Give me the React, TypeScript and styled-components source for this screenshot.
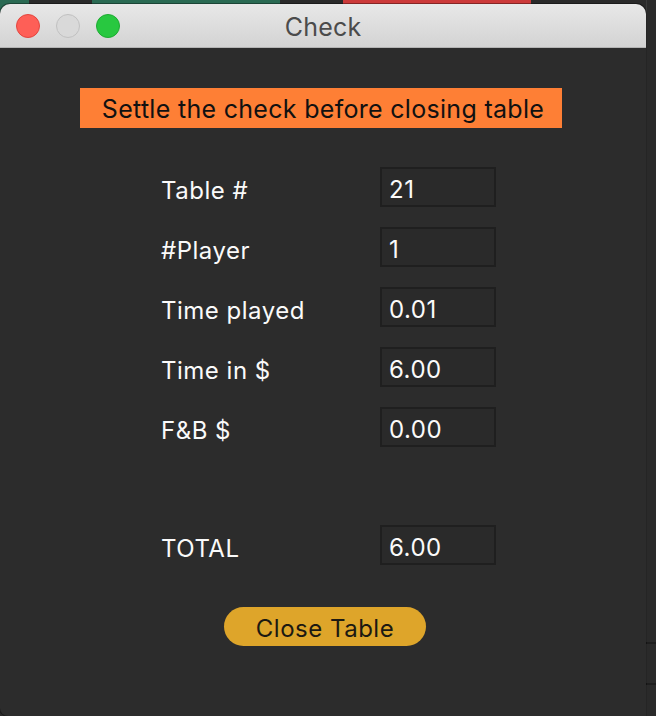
import React from "react";
import styled, { createGlobalStyle } from "styled-components";

const Global = createGlobalStyle`
  html, body { margin: 0; padding: 0; background: #2a2a2a; overflow: hidden; }
  * { box-sizing: border-box; }
`;

const Desktop = styled.div`
  position: relative;
  width: 656px;
  height: 716px;
  overflow: hidden;
  background: #2a2a2a;
  padding-top: 4px;
  font-family: Inter, "Noto Sans", "Liberation Sans", sans-serif;
`;

const BackShape = styled.div<{ $l: number; $w: number; $c: string }>`
  position: absolute;
  top: 0;
  left: ${(p) => p.$l}px;
  width: ${(p) => p.$w}px;
  height: 12px;
  background: ${(p) => p.$c};
  border-radius: 0 0 8px 8px;
`;

const BackLine = styled.div<{ $t: number }>`
  position: absolute;
  left: 646px;
  right: 0;
  top: ${(p) => p.$t}px;
  height: 2px;
  background: #1e1e1e;
`;

const BackEdge = styled.div`
  position: absolute;
  left: 646px;
  top: 0;
  bottom: 0;
  width: 1px;
  background: #3a3a3a;
`;

const Window = styled.div`
  position: relative;
  width: 646px;
  height: 712px;
  border-radius: 10px 10px 0 8px;
  overflow: hidden;
  background: #2c2c2c;
  box-shadow: 0 0 0 1px rgba(0, 0, 0, 0.35);
  display: flex;
  flex-direction: column;
`;

const TitleBar = styled.div`
  position: relative;
  height: 44px;
  flex: none;
  background: linear-gradient(#e8e8e8, #d3d3d3);
  border-bottom: 1px solid #b4b4b4;
  display: flex;
  align-items: center;
  justify-content: center;
`;

const Lights = styled.div`
  position: absolute;
  left: 16px;
  top: 10px;
  display: flex;
  gap: 16px;
`;

const Light = styled.div<{ $c: string; $b: string }>`
  width: 24px;
  height: 24px;
  border-radius: 50%;
  background: ${(p) => p.$c};
  border: 1px solid ${(p) => p.$b};
`;

const Title = styled.div`
  font-size: 25px;
  letter-spacing: 0.2px;
  color: #4b4b4b;
  margin-top: 2px;
`;

const Body = styled.div`
  flex: 1;
  display: flex;
  flex-direction: column;
  padding-top: 40px;
`;

const Banner = styled.div`
  align-self: flex-start;
  margin-left: 80px;
  width: 482px;
  height: 40px;
  background: #fe7f35;
  color: #111;
  font-size: 25px;
  letter-spacing: 0.3px;
  display: flex;
  align-items: center;
  justify-content: center;
  padding: 2px 0 0 4px;
`;

const Form = styled.div`
  margin-top: 39px;
  margin-left: 161px;
  display: grid;
  grid-template-columns: 219px 116px;
  row-gap: 20px;
`;

const Label = styled.div`
  height: 40px;
  display: flex;
  align-items: center;
  padding-top: 6px;
  font-size: 24px;
  letter-spacing: 0.5px;
  color: #fafafa;
`;

const Field = styled.div`
  height: 40px;
  border: 2px solid #1f1f1f;
  background: #2a2a2a;
  display: flex;
  align-items: center;
  padding: 5px 0 0 7px;
  font-size: 24px;
  letter-spacing: 0.5px;
  color: #fafafa;
`;

const Spacer = styled.div`
  grid-column: 1 / 3;
  height: 38px;
`;

const Button = styled.button`
  margin-top: 42px;
  margin-left: 224px;
  width: 202px;
  height: 39px;
  border: none;
  border-radius: 20px;
  background: #dea52a;
  color: #1c1912;
  font-family: inherit;
  font-size: 24px;
  letter-spacing: 0.5px;
  padding: 4px 0 0;
`;

const rows: [string, string][] = [
  ["Table #", "21"],
  ["#Player", "1"],
  ["Time played", "0.01"],
  ["Time in $", "6.00"],
  ["F&B $", "0.00"],
];

export default function App() {
  return (
    <>
      <Global />
      <Desktop>
        <BackShape $l={-10} $w={39} $c="#2a6a53" />
        <BackShape $l={92} $w={188} $c="#2a6a53" />
        <BackShape $l={343} $w={188} $c="#cc3a3a" />
        <BackEdge />
        <BackLine $t={642} />
        <BackLine $t={683} />
        <Window>
          <TitleBar>
            <Lights>
              <Light $c="#fe5f57" $b="#e2463f" />
              <Light $c="#d9d9d9" $b="#c0c0c0" />
              <Light $c="#28c840" $b="#1eaa32" />
            </Lights>
            <Title>Check</Title>
          </TitleBar>
          <Body>
            <Banner>Settle the check before closing table</Banner>
            <Form>
              {rows.map(([l, v]) => (
                <React.Fragment key={l}>
                  <Label>{l}</Label>
                  <Field>{v}</Field>
                </React.Fragment>
              ))}
              <Spacer />
              <Label>TOTAL</Label>
              <Field>6.00</Field>
            </Form>
            <Button>Close Table</Button>
          </Body>
        </Window>
      </Desktop>
    </>
  );
}
